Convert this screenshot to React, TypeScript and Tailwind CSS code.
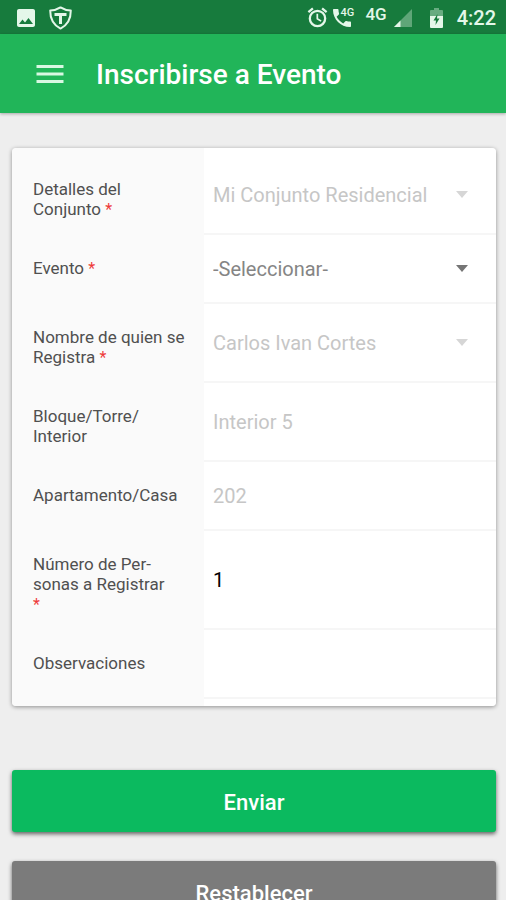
import React, { useState } from 'react';
import { MdImage, MdMenu, MdPhone } from 'react-icons/md';

const FONT = "font-['Roboto','Noto_Sans',sans-serif]";
const CONTROL =
  'block w-full appearance-none bg-transparent text-xl leading-6 outline-none';
const ACTION =
  'h-[62px] w-full shrink-0 rounded-[3px] pt-[3px] text-[22px] leading-6 font-medium text-white shadow-[0_2px_4px_rgba(0,0,0,0.6)]';

interface Field {
  id: string;
  label: string;
  required?: boolean;
  starBelow?: boolean;
  kind: 'select' | 'text';
  value: string;
  options?: string[];
  disabled?: boolean;
}

const FIELDS: Field[] = [
  {
    id: 'conjunto',
    label: 'Detalles del\nConjunto',
    required: true,
    kind: 'select',
    value: 'Mi Conjunto Residencial',
    disabled: true,
  },
  { id: 'evento', label: 'Evento', required: true, kind: 'select', value: '-Seleccionar-' },
  {
    id: 'nombre',
    label: 'Nombre de quien se\nRegistra',
    required: true,
    kind: 'select',
    value: 'Carlos Ivan Cortes',
    disabled: true,
  },
  { id: 'bloque', label: 'Bloque/Torre/\nInterior', kind: 'text', value: 'Interior 5', disabled: true },
  { id: 'apartamento', label: 'Apartamento/Casa', kind: 'text', value: '202', disabled: true },
  {
    id: 'personas',
    label: 'Número de Per-\nsonas a Registrar',
    required: true,
    starBelow: true,
    kind: 'text',
    value: '1',
  },
  { id: 'observaciones', label: 'Observaciones', kind: 'text', value: '' },
];

function ShieldIcon() {
  return (
    <svg width="25" height="24" viewBox="0 0 24 24" fill="none" stroke="currentColor">
      <path
        d="M12 1.4C9 3.4 5.600 4.300 1.700 4.400 1.600 12.500 4.500 18.600 12 22.600 19.500 18.600 22.400 12.500 22.300 4.400 18.400 4.300 15 3.400 12 1.400Z"
        strokeWidth="2"
        strokeLinejoin="round"
      />
      <path d="M6 8.500h12M12 8.500v9.500" strokeWidth="3" />
    </svg>
  );
}

function AlarmIcon() {
  return (
    <svg width="23" height="23" viewBox="0 0 24 24" fill="none" stroke="currentColor">
      <circle cx="12" cy="13" r="8" strokeWidth="2.4" />
      <path d="M2.500 6.300 7.200 2.400M21.500 6.300 16.800 2.400" strokeWidth="2.4" />
      <path d="M11.800 8v5.300l4 2.500" strokeWidth="1.8" />
    </svg>
  );
}

function SignalIcon() {
  return (
    <svg width="18" height="18" viewBox="0 0 18 18" fill="currentColor">
      <path d="M18 0v18H0Z" opacity="0.35" />
      <path d="M6.500 11.500V18H0Z" />
    </svg>
  );
}

function BatteryIcon() {
  return (
    <svg width="13" height="20" viewBox="0 0 13 20" fill="currentColor">
      <path d="M4 0h5v2h3q1 0 1 1v5H0V3q0-1 1-1h3Z" opacity="0.4" />
      <path d="M0 8h13v11q0 1-1 1H1q-1 0-1-1Z" />
      <path d="M7.500 6 3.500 12.500h2.500L5.500 17l4-6.500H7Z" fill="#177b3d" />
    </svg>
  );
}

function StatusBar() {
  return (
    <div className="flex h-[34px] shrink-0 items-center bg-[#177b3d] pt-px pr-2.5 pl-3.5 text-[#e4f7e9]">
      <MdImage size={24} />
      <div className="ml-2.5">
        <ShieldIcon />
      </div>
      <div className="ml-auto flex items-center">
        <AlarmIcon />
        <div className="relative ml-px h-6 w-6">
          <MdPhone size={24} />
          <span className="absolute top-px left-2.5 bg-[#177b3d] text-[11px] leading-3 font-medium">
            4G
          </span>
        </div>
        <span className="mb-2 ml-[11px] text-[17px] leading-4 font-medium">4G</span>
        <div className="ml-[7px]">
          <SignalIcon />
        </div>
        <div className="ml-[18px]">
          <BatteryIcon />
        </div>
        <span className="ml-3.5 text-xl font-medium">4:22</span>
      </div>
    </div>
  );
}

function FormRow({ field }: { field: Field }) {
  const [value, setValue] = useState(field.value);

  const color = field.disabled
    ? 'text-[#c6c6c6]'
    : field.kind === 'select'
      ? 'text-[#858585]'
      : 'text-black';

  return (
    <div className="flex min-h-[69px]">
      <label
        htmlFor={field.id}
        className="w-48 shrink-0 whitespace-pre-line pt-[23px] pb-4 pl-[21px] text-[17px] leading-5 text-[#505050]"
      >
        {field.label}
        {field.required && (
          <>
            {field.starBelow ? '\n' : ' '}
            <span className="text-base leading-4 text-[#ee3a3a]">*</span>
          </>
        )}
      </label>

      <div className="flex min-w-0 flex-1 items-center border-b-2 border-[#f6f6f6] bg-white pt-px pl-[9px]">
        {field.kind === 'select' ? (
          <div className="relative w-full">
            <select
              id={field.id}
              value={value}
              disabled={field.disabled}
              onChange={(e) => setValue(e.target.value)}
              className={`${CONTROL} ${color} pr-12`}
            >
              {(field.options ?? [field.value]).map((o) => (
                <option key={o}>{o}</option>
              ))}
            </select>
            <svg
              className={`pointer-events-none absolute top-2 right-7 ${field.disabled ? 'text-[#d6d6d6]' : 'text-[#757575]'}`}
              width="12"
              height="7"
              viewBox="0 0 12 7"
              fill="currentColor"
            >
              <path d="M0 0h12L6 7Z" />
            </svg>
          </div>
        ) : (
          <input
            id={field.id}
            type="text"
            value={value}
            disabled={field.disabled}
            onChange={(e) => setValue(e.target.value)}
            className={`${CONTROL} ${color}`}
          />
        )}
      </div>
    </div>
  );
}

export default function App() {
  return (
    <div className={`flex h-screen flex-col overflow-hidden bg-[#eeeeee] ${FONT}`}>
      <StatusBar />

      <header className="z-10 flex h-[79px] shrink-0 items-center bg-[#21b559] pl-8 text-white shadow-[0_1px_3px_rgba(0,0,0,0.3)]">
        <button type="button" aria-label="Menú" className="text-[#d8f8e2]">
          <MdMenu className="h-9 w-9" />
        </button>
        <h1 className="ml-7 pt-0.5 text-[28px] leading-8 font-medium">Inscribirse a Evento</h1>
      </header>

      <form
        onSubmit={(e) => e.preventDefault()}
        className="flex min-h-0 flex-1 flex-col overflow-y-auto pt-[35px] pr-2.5 pl-3 [scrollbar-width:none]"
      >
        <div className="shrink-0 rounded bg-[linear-gradient(to_right,#fafafa_192px,#ffffff_192px)] pt-2 pb-[7px] shadow-[0_1px_4px_rgba(0,0,0,0.4)]">
          {FIELDS.map((f) => (
            <FormRow key={f.id} field={f} />
          ))}
        </div>

        <button type="submit" className={`${ACTION} mt-16 bg-[#0bba5f]`}>
          Enviar
        </button>
        <button type="reset" className={`${ACTION} mt-[29px] bg-[#7b7b7b]`}>
          Restablecer
        </button>
      </form>
    </div>
  );
}
